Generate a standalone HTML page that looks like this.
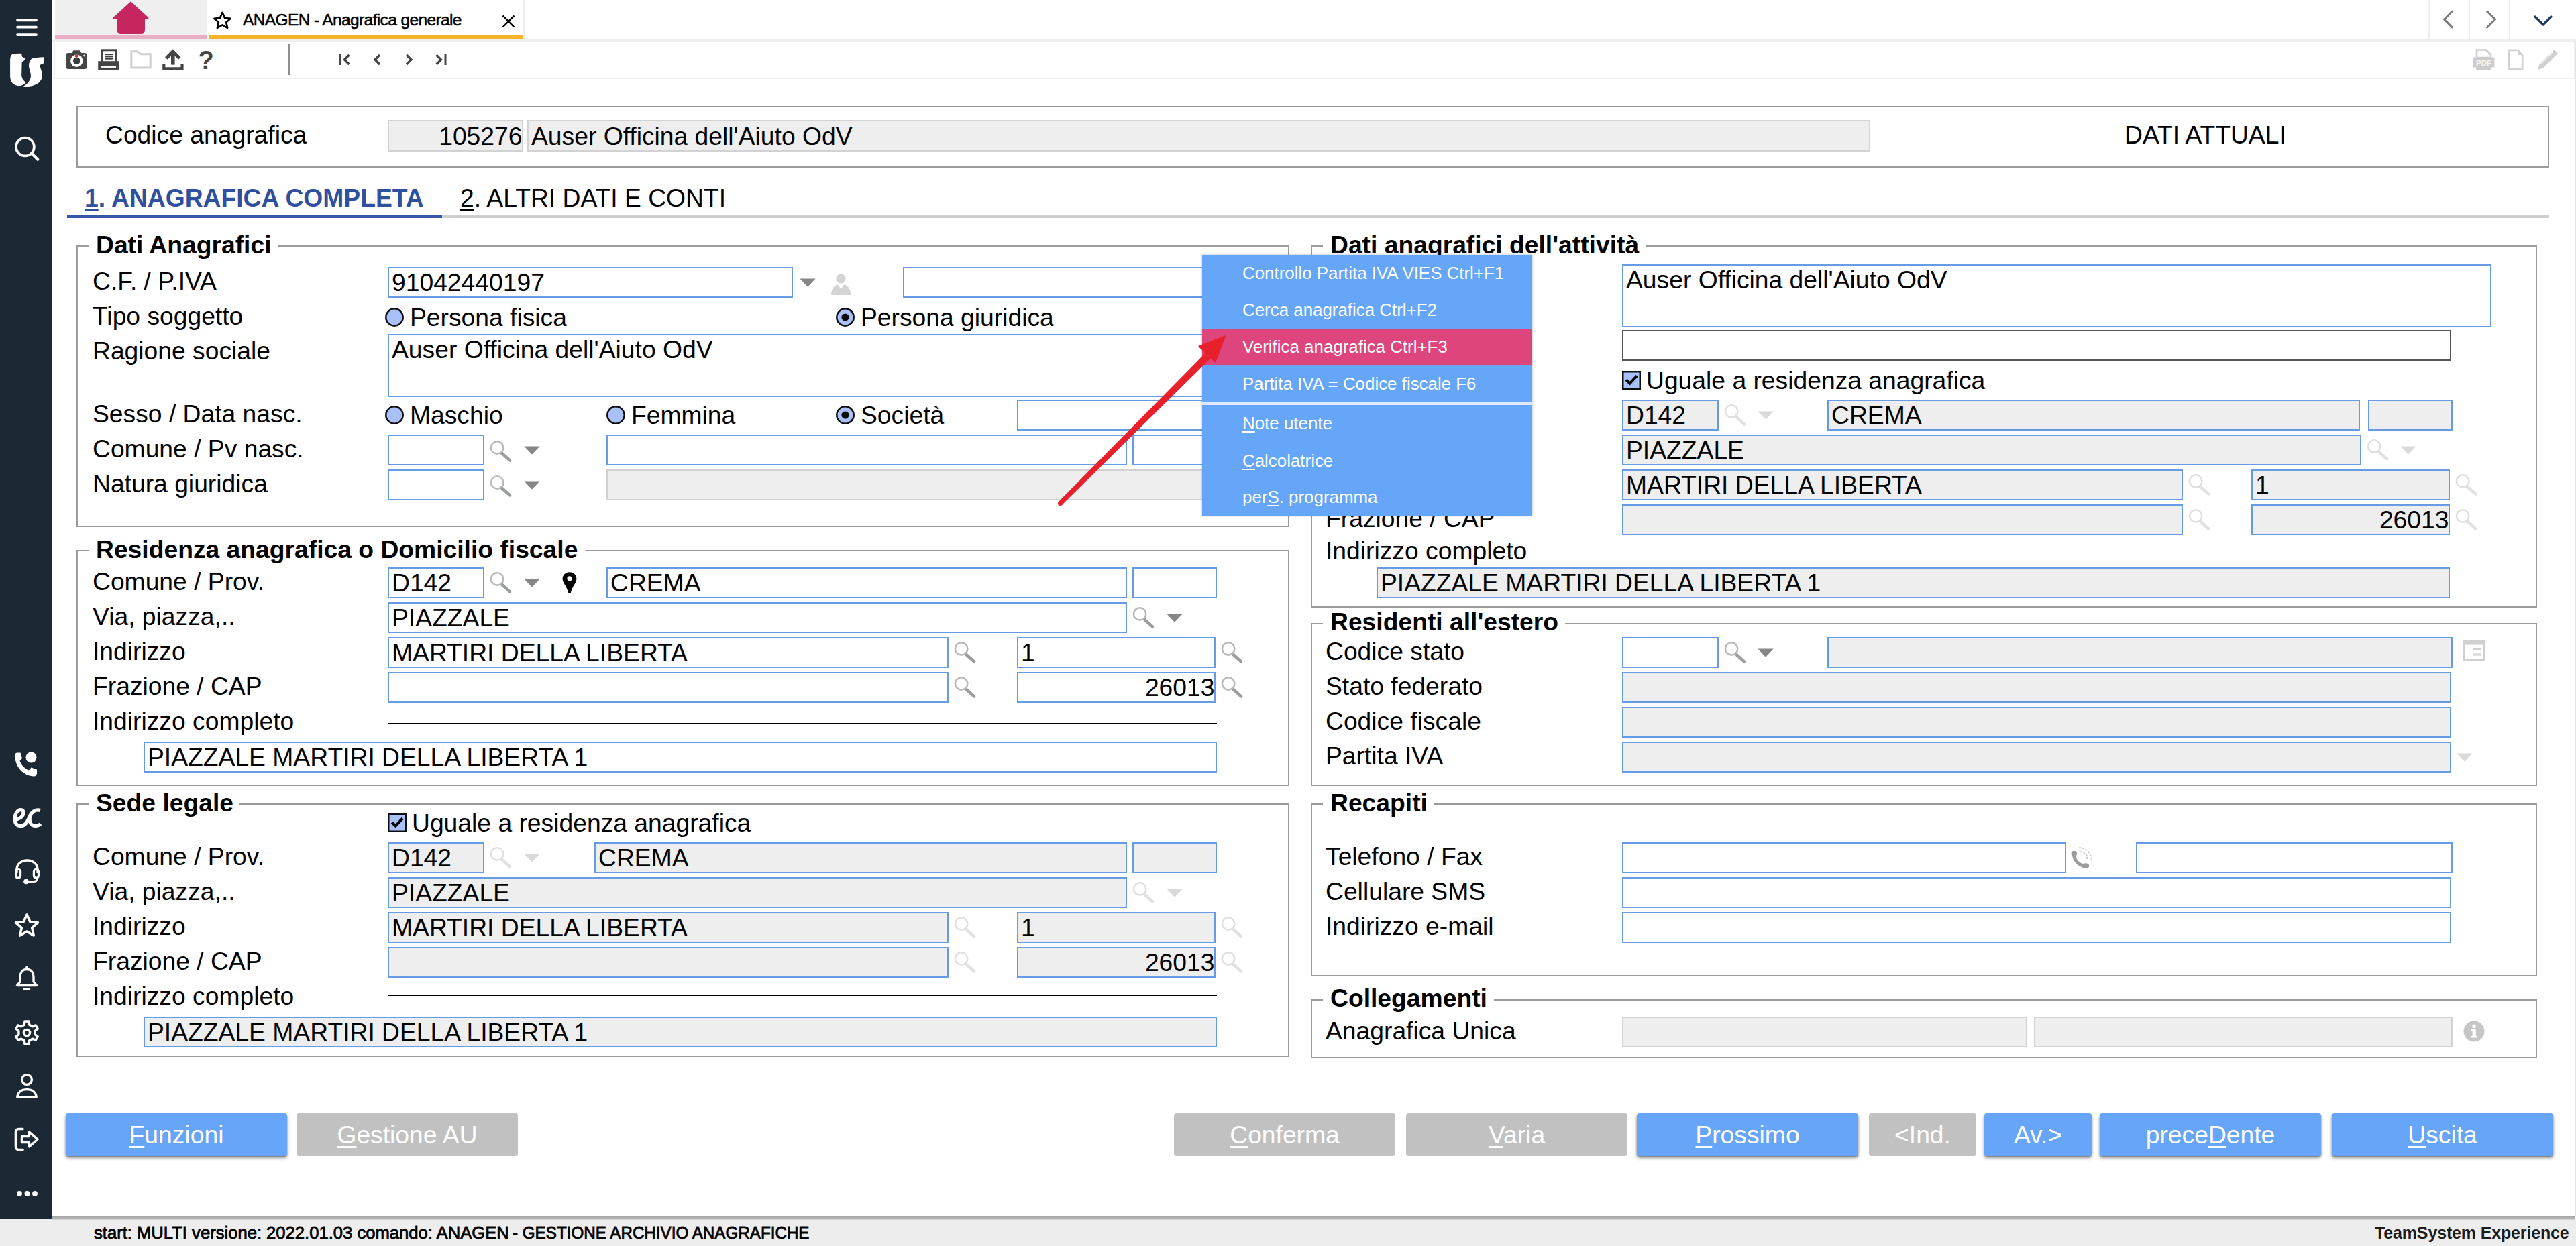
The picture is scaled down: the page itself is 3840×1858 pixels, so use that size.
<!DOCTYPE html>
<html lang="it"><head><meta charset="utf-8"><title>ANAGEN - Anagrafica generale</title>
<style>
html,body{margin:0;padding:0;background:#fff;}
body{width:3840px;height:1858px;position:relative;overflow:hidden;font-family:"Liberation Sans",sans-serif;color:#000;}
.t{position:absolute;white-space:nowrap;}
.b{font-weight:bold;}
.ic{position:absolute;display:block;overflow:visible;}
.abs{position:absolute;}
.f{position:absolute;border:2px solid #669be5;background:#fff;overflow:hidden;}
.fg{background:#eee;}
.fd{background:#eee;border-color:#d2d2d2;}
.fk{border-color:#555;}
.ft{position:absolute;white-space:nowrap;font-size:37.25px;line-height:42px;}
.fs{position:absolute;border:2px solid #9b9b9b;}
.lgbg{position:absolute;background:#fff;}
.btn{position:absolute;border-radius:4px;color:#fff;font-size:37.25px;line-height:64px;text-align:center;white-space:nowrap;}
.bb{background:#66a5f8;box-shadow:0 3px 5px rgba(0,0,0,.42),0 1px 2px rgba(0,0,0,.25);}
.bg{background:#c1c1c1;}
u{text-decoration-thickness:3px;text-underline-offset:4px;}
.mi{position:absolute;left:0;width:492px;height:55px;}
.mi span{position:absolute;left:60px;white-space:nowrap;font-size:25.9px;line-height:30px;color:#fff;}
.mi u{text-decoration-thickness:2px;text-underline-offset:3px;}
</style></head><body>

<div class="abs" style="left:78px;top:0;width:3762px;height:58px;background:#fff"></div>
<div class="abs" style="left:82px;top:0;width:227px;height:52px;background:#efefef"></div>
<div class="abs" style="left:82px;top:52px;width:227px;height:5.5px;background:#e9aec6"></div>
<div class="abs" style="left:312px;top:52px;width:469px;height:5.5px;background:#f5b32a"></div>
<div class="abs" style="left:78px;top:58px;width:3762px;height:4px;background:#eeeeee"></div>
<svg class="ic" style="left:166px;top:0" width="58" height="52" viewBox="0 0 58 52"><path d="M29 2.2 L55 26 Q56.5 28 54 28.2 H50 V44 Q50 50 44 50 H14 Q8 50 8 44 V28.2 H4 Q1.5 28 3 26 Z" fill="#c5265f"/></svg>
<svg class="ic" style="left:316.5px;top:15.5px" width="29" height="29" viewBox="0 0 32 32"><path d="M16 3.2 L19.9 12 L29.4 12.9 L22.2 19.2 L24.4 28.6 L16 23.6 L7.6 28.6 L9.8 19.2 L2.6 12.9 L12.1 12 Z" fill="none" stroke="#000" stroke-width="2.9" stroke-linejoin="round"/></svg>
<div class="t " style="left:362.00px;top:14.51px;font-size:24.5px;line-height:30px;letter-spacing:-0.62px;-webkit-text-stroke:0.55px #000;">ANAGEN - Anagrafica generale</div>
<svg class="ic" style="left:748px;top:22px" width="20" height="20" viewBox="0 0 20 20"><path d="M1.5 1.5 L18.5 18.5 M18.5 1.5 L1.5 18.5" stroke="#000" stroke-width="2.4"/></svg>
<div class="abs" style="left:780px;top:0;width:1.5px;height:58px;background:#ececec"></div>
<div class="abs" style="left:3620px;top:0;width:2px;height:58px;background:#eeeeee"></div>
<div class="abs" style="left:3680px;top:0;width:2px;height:58px;background:#eeeeee"></div>
<div class="abs" style="left:3740px;top:0;width:2px;height:58px;background:#eeeeee"></div>
<svg class="ic" style="left:3640px;top:14px" width="20" height="30" viewBox="0 0 20 30"><path d="M15.5 3 L3.5 15 L15.5 27" fill="none" stroke="#777" stroke-width="3" stroke-linecap="round" stroke-linejoin="round"/></svg>
<svg class="ic" style="left:3703px;top:14px" width="20" height="30" viewBox="0 0 20 30"><path d="M4.5 3 L16.5 15 L4.5 27" fill="none" stroke="#777" stroke-width="3" stroke-linecap="round" stroke-linejoin="round"/></svg>
<svg class="ic" style="left:3776px;top:22px" width="30" height="18" viewBox="0 0 30 18"><path d="M3 3 L15 15 L27 3" fill="none" stroke="#1d3a5f" stroke-width="3.2" stroke-linecap="round" stroke-linejoin="round"/></svg>
<div class="abs" style="left:80px;top:62px;width:3755px;height:54px;background:#fff;border:2px solid #ededed;border-top:none"></div>
<div class="abs" style="left:3838px;top:62px;width:2px;height:1752px;background:#e6e6e6"></div>
<svg class="ic" style="left:98px;top:75px" width="32" height="28" viewBox="0 0 32 28"><path d="M0 8 Q0 4 4 4 H9.2 L11.4 0.2 H21.2 L23.4 4 H28 Q32 4 32 8 V24 Q32 28 28 28 H4 Q0 28 0 24 Z" fill="#454545"/><circle cx="16.3" cy="15.8" r="9.2" fill="#fff"/><circle cx="16.3" cy="15.8" r="5.3" fill="#3c3c3c"/><ellipse cx="16.3" cy="8.6" rx="2.8" ry="1.9" fill="#d4222a"/><circle cx="27.6" cy="8" r="1.4" fill="#e6e6e6"/></svg>
<svg class="ic" style="left:146px;top:73px" width="32" height="32" viewBox="0 0 32 32"><rect x="6" y="1.8" width="20.6" height="20" fill="#fff" stroke="#454545" stroke-width="3"/><path d="M10 8.2 H22.6 M10 11.4 H22.6 M10 14.6 H22.6" stroke="#454545" stroke-width="2.1"/><rect x="0.2" y="18.2" width="31.4" height="13.3" fill="#454545"/><path d="M4.8 26.6 H27" stroke="#fff" stroke-width="2.6"/></svg>
<svg class="ic" style="left:194px;top:75px" width="32" height="28" viewBox="0 0 32 28"><path d="M1.8 26 V1.8 H11 L15.5 5.8 H30.2 V26 Z" fill="#fff" stroke="#cfcfcf" stroke-width="3"/></svg>
<svg class="ic" style="left:242px;top:74px" width="32" height="31" viewBox="0 0 32 31"><path d="M15.8 4 V22.6" stroke="#454545" stroke-width="5.6"/><path d="M5.8 13 L15.8 3 L25.8 13" fill="none" stroke="#454545" stroke-width="5.2"/><path d="M2.3 21.4 V28.4 H29.5 V21.4" fill="none" stroke="#454545" stroke-width="4.2"/></svg>
<div class="t b" style="left:295.50px;top:67.83px;font-size:38px;line-height:44px;color:#454545;">?</div>
<div class="abs" style="left:430px;top:66px;width:1.5px;height:46px;background:#8f8f8f"></div>
<svg class="ic" style="left:504px;top:80px" width="20" height="18" viewBox="0 0 20 18"><path d="M3 1 V17" stroke="#454545" stroke-width="3"/><path d="M16.5 2 L9.5 9 L16.5 16" fill="none" stroke="#454545" stroke-width="3.4"/></svg>
<svg class="ic" style="left:554px;top:80px" width="16" height="18" viewBox="0 0 16 18"><path d="M12 2 L5 9 L12 16" fill="none" stroke="#454545" stroke-width="3.4"/></svg>
<svg class="ic" style="left:602px;top:80px" width="16" height="18" viewBox="0 0 16 18"><path d="M4 2 L11 9 L4 16" fill="none" stroke="#454545" stroke-width="3.4"/></svg>
<svg class="ic" style="left:647px;top:80px" width="20" height="18" viewBox="0 0 20 18"><path d="M17 1 V17" stroke="#454545" stroke-width="3"/><path d="M3.5 2 L10.5 9 L3.5 16" fill="none" stroke="#454545" stroke-width="3.4"/></svg>
<svg class="ic" style="left:3686px;top:73px" width="33" height="32" viewBox="0 0 33 32"><path d="M6 1.5 H20 L27 8.5 V13 H6 Z" fill="#fff" stroke="#cdcdcd" stroke-width="2.6"/><rect x="0.5" y="12.5" width="32" height="15" fill="#cdcdcd"/><rect x="5" y="26" width="23" height="5.5" fill="#cdcdcd"/><text x="16.5" y="25" font-family="Liberation Sans,sans-serif" font-weight="bold" font-size="11.5" text-anchor="middle" fill="#f4f4f4">PDF</text></svg>
<svg class="ic" style="left:3738px;top:73px" width="24" height="32" viewBox="0 0 24 32"><path d="M1.8 1.8 H15 L22.2 9 V30.2 H1.8 Z" fill="#fff" stroke="#d2d2d2" stroke-width="2.8"/><path d="M15 1.8 V9 H22.2 Z" fill="#d2d2d2"/></svg>
<svg class="ic" style="left:3782px;top:73px" width="32" height="32" viewBox="0 0 32 32"><path d="M25.5 1 L31 6.5 L9 28.5 L1 31 L3.5 23 Z" fill="#d0d0d0"/><path d="M6 22 L24 4" stroke="#f2f2f2" stroke-width="1.6"/></svg>
<div class="abs" style="left:0;top:0;width:78px;height:1818px;background:#1d2835;box-shadow:inset -1px 0 0 #141b22"></div>
<svg class="ic" style="left:22px;top:26px" width="36" height="30" viewBox="0 0 36 30"><path d="M4 4.3 H32 M4 14.7 H32 M4 25.1 H32" stroke="#fff" stroke-width="3.8" stroke-linecap="round"/></svg>
<svg class="ic" style="left:8px;top:72px" width="64" height="64" viewBox="0 0 1246 1246"><path d="M250 155 L470 150 L485 250 Q575 280 580 330 L480 400 L470 780 Q480 930 600 990 Q520 1090 400 1095 Q150 1080 138 820 L138 330 Q140 170 250 155 Z" fill="#fff"/><path d="M1110 258 L1112 440 Q1030 450 1000 500 Q1020 580 1060 700 Q1110 880 960 1010 Q800 1120 520 1112 Q700 1000 735 850 Q750 760 700 620 Q640 430 760 300 Q900 262 1110 258 Z" fill="#fff"/></svg>
<svg class="ic" style="left:18px;top:200px" width="44" height="44" viewBox="0 0 44 44"><circle cx="19.4" cy="19" r="13.4" fill="none" stroke="#fff" stroke-width="3.8"/><path d="M29.2 28.8 L38.2 37.8" stroke="#fff" stroke-width="4.2" stroke-linecap="round"/></svg>
<svg class="ic" style="left:20px;top:1120px" width="38" height="40" viewBox="0 0 38 40"><circle cx="26.5" cy="9.5" r="8" fill="#fff"/><path d="M2 6 C2 4 4 2.5 6 2.5 H10.5 L13 11 L9.5 14.5 C11.5 20.5 16.5 26 23 28.5 L26.5 24.5 L35 27.5 V33 C35 35.5 33 37.5 30.5 37.5 C15 37 2.5 24 2 6 Z" fill="#fff"/></svg>
<svg class="ic" style="left:17px;top:1203px" width="46" height="34" viewBox="0 0 46 34"><path d="M3.5 18.5 C10 20 18 15 18 9 C18 4 12 3 8.5 7.5 C3 14.5 4 27 12 28.5 C20 30 24 22 27 15 C30 8 36 3 43 5.5" fill="none" stroke="#fff" stroke-width="5.2" stroke-linecap="butt"/><path d="M29.5 11 C25 18 27 28 35 28.5 C38.5 28.7 41.5 27.5 43.5 25.5" fill="none" stroke="#fff" stroke-width="5.2"/></svg>
<svg class="ic" style="left:20px;top:1280px" width="40" height="40" viewBox="0 0 40 40"><path d="M5 22 V17 C5 8.5 11.5 3 20.5 3 C29.5 3 36 8.5 36 17 V22" fill="none" stroke="#fff" stroke-width="3.4"/><rect x="3.6" y="16.5" width="7" height="12.5" rx="3" fill="none" stroke="#fff" stroke-width="3.2"/><rect x="30.4" y="16.5" width="7" height="12.5" rx="3" fill="none" stroke="#fff" stroke-width="3.2"/><path d="M35.5 28 V30 C35.5 33 33 34.5 30 34.5 H22" fill="none" stroke="#fff" stroke-width="3.2"/><circle cx="19" cy="34.5" r="3.8" fill="#fff"/></svg>
<svg class="ic" style="left:20px;top:1360px" width="40" height="40" viewBox="0 0 40 40"><path d="M20 4 L24.8 14.6 L36.4 15.8 L27.7 23.6 L30.2 35 L20 29.1 L9.8 35 L12.3 23.6 L3.6 15.8 L15.2 14.6 Z" fill="none" stroke="#fff" stroke-width="3.6" stroke-linejoin="round"/></svg>
<svg class="ic" style="left:22px;top:1440px" width="36" height="40" viewBox="0 0 36 40"><path d="M18 5.5 C11 5.5 8 11 8 17 V24 L3.5 29.5 H32.5 L28 24 V17 C28 11 25 5.5 18 5.5 Z" fill="none" stroke="#fff" stroke-width="3.4" stroke-linejoin="round"/><path d="M18 5.5 V2.5" stroke="#fff" stroke-width="3.6" stroke-linecap="round"/><path d="M14.5 35 H21.5" stroke="#fff" stroke-width="3.6" stroke-linecap="round"/></svg>
<svg class="ic" style="left:20px;top:1520px" width="40" height="40" viewBox="0 0 40 40"><path d="M16.95 3.07 L23.05 3.07 L23.71 8.17 L28.39 10.87 L33.14 8.90 L36.18 14.17 L32.10 17.30 L32.10 22.70 L36.18 25.83 L33.14 31.10 L28.39 29.13 L23.71 31.83 L23.05 36.93 L16.95 36.93 L16.29 31.83 L11.61 29.13 L6.86 31.10 L3.82 25.83 L7.90 22.70 L7.90 17.30 L3.82 14.17 L6.86 8.90 L11.61 10.87 L16.29 8.17 Z" fill="none" stroke="#fff" stroke-width="3.4" stroke-linejoin="round"/><circle cx="20" cy="20" r="4.6" fill="none" stroke="#fff" stroke-width="3.4"/></svg>
<svg class="ic" style="left:22px;top:1600px" width="36" height="40" viewBox="0 0 36 40"><circle cx="18" cy="10" r="7.4" fill="none" stroke="#fff" stroke-width="3.4"/><path d="M3.8 36 C4.5 28.5 10 24.6 18 24.6 C26 24.6 31.5 28.5 32.2 36 Z" fill="none" stroke="#fff" stroke-width="3.4" stroke-linejoin="round"/></svg>
<svg class="ic" style="left:20px;top:1680px" width="40" height="38" viewBox="0 0 40 38"><path d="M14 3.5 H8 C5 3.5 3.5 5.5 3.5 8 V30 C3.5 32.5 5 34.5 8 34.5 H14" fill="none" stroke="#fff" stroke-width="3.6" stroke-linecap="round"/><path d="M12.5 14.5 H23.5 V8 L36 19 L23.5 30 V23.5 H12.5 Z" fill="none" stroke="#fff" stroke-width="3.4" stroke-linejoin="round"/></svg>
<svg class="ic" style="left:24px;top:1774px" width="34" height="12" viewBox="0 0 34 12"><circle cx="5" cy="6" r="3.9" fill="#fff"/><circle cx="16.5" cy="6" r="3.9" fill="#fff"/><circle cx="28" cy="6" r="3.9" fill="#fff"/></svg>
<div class="abs" style="left:0;top:1818px;width:3840px;height:40px;background:#ededed"></div>
<div class="abs" style="left:78px;top:1814px;width:3760px;height:4.5px;background:linear-gradient(#a4a4a4,#b9b9b9 65%,#dcdcdc)"></div>
<div class="t " style="left:140.00px;top:1821.59px;font-size:26px;line-height:32px;transform-origin:0 50%;transform:scaleX(0.985);-webkit-text-stroke:0.85px #000;">start: MULTI versione: 2022.01.03 comando: ANAGEN</div>
<div class="t " style="left:763.60px;top:1821.59px;font-size:26px;line-height:32px;transform-origin:0 50%;transform:scaleX(0.931);-webkit-text-stroke:0.85px #000;">- GESTIONE ARCHIVIO ANAGRAFICHE</div>
<div class="t b" style="left:3540.00px;top:1821.74px;font-size:25px;line-height:32px;letter-spacing:-0.15px;color:#1c1c1c;">TeamSystem Experience</div>
<div class="abs" style="left:114px;top:158px;width:3682px;height:88px;border:2px solid #9b9b9b"></div>
<div class="t " style="left:157.00px;top:180.09px;font-size:37.25px;line-height:42px;">Codice anagrafica</div>
<div class="f fd" style="left:578px;top:179px;width:198px;height:43px"><span class="ft" style="right:-0.5px;top:0.79px">105276</span></div>
<div class="f fd" style="left:786px;top:179px;width:1998px;height:43px"><span class="ft" style="left:4px;top:0.79px">Auser Officina dell'Aiuto OdV</span></div>
<div class="t " style="left:3167.00px;top:180.09px;font-size:37.25px;line-height:42px;">DATI ATTUALI</div>
<div class="t b" style="left:126.00px;top:274.09px;font-size:37.25px;line-height:42px;color:#2f4f9f;"><u>1</u>. ANAGRAFICA COMPLETA</div>
<div class="t " style="left:686.00px;top:274.09px;font-size:37.25px;line-height:42px;"><u>2</u>. ALTRI DATI E CONTI</div>
<div class="abs" style="left:100px;top:321px;width:3700px;height:4px;background:#cfcfcf"></div>
<div class="abs" style="left:100px;top:321px;width:559px;height:4px;background:#3656a8"></div>
<div class="fs" style="left:114px;top:366px;width:1804px;height:416px"></div>
<div class="lgbg" style="left:132px;top:364px;width:282px;height:8px"></div>
<div class="t b" style="left:143.00px;top:344.09px;font-size:37.25px;line-height:42px;">Dati Anagrafici</div>
<div class="t " style="left:138.00px;top:398.09px;font-size:37.25px;line-height:42px;">C.F. / P.IVA</div>
<div class="f fw" style="left:578px;top:398px;width:600px;height:42px"><span class="ft" style="left:4px;top:-0.41px">91042440197</span></div>
<svg class="ic" style="left:1192px;top:415px" width="24" height="13" viewBox="0 0 24 13"><path d="M0.3 0.4 H23.7 L12 12.8 Z" fill="#868686"/></svg>
<svg class="ic" style="left:1238px;top:407px" width="31" height="34" viewBox="0 0 31 34"><circle cx="15.5" cy="8.5" r="7.2" fill="#d4d4d4"/><path d="M1 33 C1 22 7 18 11 17.5 L15.5 24 L20 17.5 C24 18 30 22 30 33 Z" fill="#d4d4d4"/></svg>
<div class="f fw" style="left:1346px;top:398px;width:550px;height:42px"></div>
<div class="t " style="left:138.00px;top:450.09px;font-size:37.25px;line-height:42px;">Tipo soggetto</div>
<svg class="ic" style="left:574px;top:459px" width="28" height="28" viewBox="0 0 28 28"><circle cx="14" cy="14" r="12.7" fill="#a9c1f8" stroke="#0d0d12" stroke-width="2.5"/></svg>
<div class="t " style="left:611.00px;top:451.89px;font-size:37.25px;line-height:42px;">Persona fisica</div>
<svg class="ic" style="left:1246px;top:459px" width="28" height="28" viewBox="0 0 28 28"><circle cx="14" cy="14" r="12.7" fill="#a9c1f8" stroke="#0d0d12" stroke-width="2.5"/><circle cx="14" cy="14" r="5.6" fill="#0a0a0a"/></svg>
<div class="t " style="left:1283.00px;top:451.89px;font-size:37.25px;line-height:42px;">Persona giuridica</div>
<div class="t " style="left:138.00px;top:502.09px;font-size:37.25px;line-height:42px;">Ragione sociale</div>
<div class="f fw" style="left:578px;top:498px;width:1318px;height:90px"><span class="ft" style="left:4px;top:0.09px">Auser Officina dell'Aiuto OdV</span></div>
<div class="t " style="left:138.00px;top:596.09px;font-size:37.25px;line-height:42px;">Sesso / Data nasc.</div>
<svg class="ic" style="left:574px;top:605px" width="28" height="28" viewBox="0 0 28 28"><circle cx="14" cy="14" r="12.7" fill="#a9c1f8" stroke="#0d0d12" stroke-width="2.5"/></svg>
<div class="t " style="left:611.00px;top:597.59px;font-size:37.25px;line-height:42px;">Maschio</div>
<svg class="ic" style="left:904px;top:605px" width="28" height="28" viewBox="0 0 28 28"><circle cx="14" cy="14" r="12.7" fill="#a9c1f8" stroke="#0d0d12" stroke-width="2.5"/></svg>
<div class="t " style="left:941.00px;top:597.59px;font-size:37.25px;line-height:42px;">Femmina</div>
<svg class="ic" style="left:1246px;top:605px" width="28" height="28" viewBox="0 0 28 28"><circle cx="14" cy="14" r="12.7" fill="#a9c1f8" stroke="#0d0d12" stroke-width="2.5"/><circle cx="14" cy="14" r="5.6" fill="#0a0a0a"/></svg>
<div class="t " style="left:1283.00px;top:597.59px;font-size:37.25px;line-height:42px;">Società</div>
<div class="f fw" style="left:1516px;top:596px;width:380px;height:42px"></div>
<div class="t " style="left:138.00px;top:648.09px;font-size:37.25px;line-height:42px;">Comune / Pv nasc.</div>
<div class="f fw" style="left:578px;top:648px;width:140px;height:42px"></div>
<svg class="ic" style="left:730px;top:657px" width="34" height="33" viewBox="0 0 34 33"><line x1="17.6" y1="18.2" x2="30" y2="29.4" stroke="#9a9e9a" stroke-width="4.6" stroke-linecap="round"/><circle cx="11.1" cy="10.4" r="9.2" fill="#fff" fill-opacity="0.0" stroke="#b9b9b9" stroke-width="2.6"/></svg>
<svg class="ic" style="left:781px;top:665px" width="24" height="13" viewBox="0 0 24 13"><path d="M0.3 0.4 H23.7 L12 12.8 Z" fill="#868686"/></svg>
<div class="f fw" style="left:904px;top:648px;width:772px;height:42px"></div>
<div class="f fw" style="left:1688px;top:648px;width:122px;height:42px"></div>
<div class="t " style="left:138.00px;top:700.09px;font-size:37.25px;line-height:42px;">Natura giuridica</div>
<div class="f fw" style="left:578px;top:700px;width:140px;height:42px"></div>
<svg class="ic" style="left:730px;top:709px" width="34" height="33" viewBox="0 0 34 33"><line x1="17.6" y1="18.2" x2="30" y2="29.4" stroke="#9a9e9a" stroke-width="4.6" stroke-linecap="round"/><circle cx="11.1" cy="10.4" r="9.2" fill="#fff" fill-opacity="0.0" stroke="#b9b9b9" stroke-width="2.6"/></svg>
<svg class="ic" style="left:781px;top:717px" width="24" height="13" viewBox="0 0 24 13"><path d="M0.3 0.4 H23.7 L12 12.8 Z" fill="#868686"/></svg>
<div class="f fd" style="left:904px;top:700px;width:906px;height:42px"></div>
<div class="fs" style="left:114px;top:820px;width:1804px;height:348px"></div>
<div class="lgbg" style="left:132px;top:818px;width:740px;height:8px"></div>
<div class="t b" style="left:143.00px;top:797.59px;font-size:37.25px;line-height:42px;">Residenza anagrafica o Domicilio fiscale</div>
<div class="t " style="left:138.00px;top:846.09px;font-size:37.25px;line-height:42px;">Comune / Prov.</div>
<div class="f fw" style="left:578px;top:846px;width:140px;height:42px"><span class="ft" style="left:4px;top:-0.41px">D142</span></div>
<svg class="ic" style="left:730px;top:853px" width="34" height="33" viewBox="0 0 34 33"><line x1="17.6" y1="18.2" x2="30" y2="29.4" stroke="#9a9e9a" stroke-width="4.6" stroke-linecap="round"/><circle cx="11.1" cy="10.4" r="9.2" fill="#fff" fill-opacity="0.0" stroke="#b9b9b9" stroke-width="2.6"/></svg>
<svg class="ic" style="left:781px;top:863px" width="24" height="13" viewBox="0 0 24 13"><path d="M0.3 0.4 H23.7 L12 12.8 Z" fill="#868686"/></svg>
<svg class="ic" style="left:838px;top:853px" width="22" height="32" viewBox="0 0 22 32"><path d="M11 0.3 C4.6 0.3 0.6 4.8 0.6 10.2 C0.6 16.5 7 21 9.4 31.5 H12.6 C15 21 21.4 16.5 21.4 10.2 C21.4 4.8 17.4 0.3 11 0.3 Z" fill="#000"/><circle cx="11" cy="9.8" r="3.6" fill="#fff"/></svg>
<div class="f fw" style="left:904px;top:846px;width:772px;height:42px"><span class="ft" style="left:4px;top:-0.41px">CREMA</span></div>
<div class="f fw" style="left:1688px;top:846px;width:122px;height:42px"></div>
<div class="t " style="left:138.00px;top:898.09px;font-size:37.25px;line-height:42px;">Via, piazza,..</div>
<div class="f fw" style="left:578px;top:898px;width:1098px;height:42px"><span class="ft" style="left:4px;top:-0.41px">PIAZZALE</span></div>
<svg class="ic" style="left:1688px;top:905px" width="34" height="33" viewBox="0 0 34 33"><line x1="17.6" y1="18.2" x2="30" y2="29.4" stroke="#9a9e9a" stroke-width="4.6" stroke-linecap="round"/><circle cx="11.1" cy="10.4" r="9.2" fill="#fff" fill-opacity="0.0" stroke="#b9b9b9" stroke-width="2.6"/></svg>
<svg class="ic" style="left:1739px;top:915px" width="24" height="13" viewBox="0 0 24 13"><path d="M0.3 0.4 H23.7 L12 12.8 Z" fill="#868686"/></svg>
<div class="t " style="left:138.00px;top:950.09px;font-size:37.25px;line-height:42px;">Indirizzo</div>
<div class="f fw" style="left:578px;top:950px;width:832px;height:42px"><span class="ft" style="left:4px;top:-0.41px">MARTIRI DELLA LIBERTA</span></div>
<svg class="ic" style="left:1422px;top:957px" width="34" height="33" viewBox="0 0 34 33"><line x1="17.6" y1="18.2" x2="30" y2="29.4" stroke="#9a9e9a" stroke-width="4.6" stroke-linecap="round"/><circle cx="11.1" cy="10.4" r="9.2" fill="#fff" fill-opacity="0.0" stroke="#b9b9b9" stroke-width="2.6"/></svg>
<div class="f fw" style="left:1516px;top:950px;width:292px;height:42px"><span class="ft" style="left:4px;top:-0.41px">1</span></div>
<svg class="ic" style="left:1820px;top:957px" width="34" height="33" viewBox="0 0 34 33"><line x1="17.6" y1="18.2" x2="30" y2="29.4" stroke="#9a9e9a" stroke-width="4.6" stroke-linecap="round"/><circle cx="11.1" cy="10.4" r="9.2" fill="#fff" fill-opacity="0.0" stroke="#b9b9b9" stroke-width="2.6"/></svg>
<div class="t " style="left:138.00px;top:1002.09px;font-size:37.25px;line-height:42px;">Frazione / CAP</div>
<div class="f fw" style="left:578px;top:1002px;width:832px;height:42px"></div>
<svg class="ic" style="left:1422px;top:1009px" width="34" height="33" viewBox="0 0 34 33"><line x1="17.6" y1="18.2" x2="30" y2="29.4" stroke="#9a9e9a" stroke-width="4.6" stroke-linecap="round"/><circle cx="11.1" cy="10.4" r="9.2" fill="#fff" fill-opacity="0.0" stroke="#b9b9b9" stroke-width="2.6"/></svg>
<div class="f fw" style="left:1516px;top:1002px;width:292px;height:42px"><span class="ft" style="right:-0.5px;top:-0.41px">26013</span></div>
<svg class="ic" style="left:1820px;top:1009px" width="34" height="33" viewBox="0 0 34 33"><line x1="17.6" y1="18.2" x2="30" y2="29.4" stroke="#9a9e9a" stroke-width="4.6" stroke-linecap="round"/><circle cx="11.1" cy="10.4" r="9.2" fill="#fff" fill-opacity="0.0" stroke="#b9b9b9" stroke-width="2.6"/></svg>
<div class="t " style="left:138.00px;top:1054.09px;font-size:37.25px;line-height:42px;">Indirizzo completo</div>
<div class="abs" style="left:578px;top:1078px;width:1236px;height:1px;background:#000"></div>
<div class="f fw" style="left:214px;top:1106px;width:1596px;height:42px"><span class="ft" style="left:4px;top:-0.41px">PIAZZALE MARTIRI DELLA LIBERTA 1</span></div>
<div class="fs" style="left:114px;top:1198px;width:1804px;height:374px"></div>
<div class="lgbg" style="left:132px;top:1196px;width:225px;height:8px"></div>
<div class="t b" style="left:143.00px;top:1176.09px;font-size:37.25px;line-height:42px;">Sede legale</div>
<svg class="ic" style="left:578px;top:1213px" width="28" height="28" viewBox="0 0 28 28"><rect x="1.25" y="1.25" width="25.5" height="25.5" fill="#a9c1f8" stroke="#0d0d12" stroke-width="2.5"/><path d="M6.2 13.2 L11.6 18.6 L22.2 7.4" fill="none" stroke="#000" stroke-width="4.2"/></svg>
<div class="t " style="left:614.00px;top:1205.59px;font-size:37.25px;line-height:42px;">Uguale a residenza anagrafica</div>
<div class="t " style="left:138.00px;top:1256.09px;font-size:37.25px;line-height:42px;">Comune / Prov.</div>
<div class="f fg" style="left:578px;top:1256px;width:140px;height:42px"><span class="ft" style="left:4px;top:-0.41px">D142</span></div>
<svg class="ic" style="left:730px;top:1263px" width="34" height="33" viewBox="0 0 34 33"><line x1="17.6" y1="18.2" x2="30" y2="29.4" stroke="#e1e1e1" stroke-width="4.6" stroke-linecap="round"/><circle cx="11.1" cy="10.4" r="9.2" fill="#fff" fill-opacity="0.0" stroke="#e0e0e0" stroke-width="2.6"/></svg>
<svg class="ic" style="left:781px;top:1273px" width="24" height="13" viewBox="0 0 24 13"><path d="M0.3 0.4 H23.7 L12 12.8 Z" fill="#dadada"/></svg>
<div class="f fg" style="left:886px;top:1256px;width:790px;height:42px"><span class="ft" style="left:4px;top:-0.41px">CREMA</span></div>
<div class="f fg" style="left:1688px;top:1256px;width:122px;height:42px"></div>
<div class="t " style="left:138.00px;top:1308.09px;font-size:37.25px;line-height:42px;">Via, piazza,..</div>
<div class="f fg" style="left:578px;top:1308px;width:1098px;height:42px"><span class="ft" style="left:4px;top:-0.41px">PIAZZALE</span></div>
<svg class="ic" style="left:1688px;top:1315px" width="34" height="33" viewBox="0 0 34 33"><line x1="17.6" y1="18.2" x2="30" y2="29.4" stroke="#e1e1e1" stroke-width="4.6" stroke-linecap="round"/><circle cx="11.1" cy="10.4" r="9.2" fill="#fff" fill-opacity="0.0" stroke="#e0e0e0" stroke-width="2.6"/></svg>
<svg class="ic" style="left:1739px;top:1325px" width="24" height="13" viewBox="0 0 24 13"><path d="M0.3 0.4 H23.7 L12 12.8 Z" fill="#dadada"/></svg>
<div class="t " style="left:138.00px;top:1360.09px;font-size:37.25px;line-height:42px;">Indirizzo</div>
<div class="f fg" style="left:578px;top:1360px;width:832px;height:42px"><span class="ft" style="left:4px;top:-0.41px">MARTIRI DELLA LIBERTA</span></div>
<svg class="ic" style="left:1422px;top:1367px" width="34" height="33" viewBox="0 0 34 33"><line x1="17.6" y1="18.2" x2="30" y2="29.4" stroke="#e1e1e1" stroke-width="4.6" stroke-linecap="round"/><circle cx="11.1" cy="10.4" r="9.2" fill="#fff" fill-opacity="0.0" stroke="#e0e0e0" stroke-width="2.6"/></svg>
<div class="f fg" style="left:1516px;top:1360px;width:292px;height:42px"><span class="ft" style="left:4px;top:-0.41px">1</span></div>
<svg class="ic" style="left:1820px;top:1367px" width="34" height="33" viewBox="0 0 34 33"><line x1="17.6" y1="18.2" x2="30" y2="29.4" stroke="#e1e1e1" stroke-width="4.6" stroke-linecap="round"/><circle cx="11.1" cy="10.4" r="9.2" fill="#fff" fill-opacity="0.0" stroke="#e0e0e0" stroke-width="2.6"/></svg>
<div class="t " style="left:138.00px;top:1412.09px;font-size:37.25px;line-height:42px;">Frazione / CAP</div>
<div class="f fg" style="left:578px;top:1412px;width:832px;height:42px"></div>
<svg class="ic" style="left:1422px;top:1419px" width="34" height="33" viewBox="0 0 34 33"><line x1="17.6" y1="18.2" x2="30" y2="29.4" stroke="#e1e1e1" stroke-width="4.6" stroke-linecap="round"/><circle cx="11.1" cy="10.4" r="9.2" fill="#fff" fill-opacity="0.0" stroke="#e0e0e0" stroke-width="2.6"/></svg>
<div class="f fg" style="left:1516px;top:1412px;width:292px;height:42px"><span class="ft" style="right:-0.5px;top:-0.41px">26013</span></div>
<svg class="ic" style="left:1820px;top:1419px" width="34" height="33" viewBox="0 0 34 33"><line x1="17.6" y1="18.2" x2="30" y2="29.4" stroke="#e1e1e1" stroke-width="4.6" stroke-linecap="round"/><circle cx="11.1" cy="10.4" r="9.2" fill="#fff" fill-opacity="0.0" stroke="#e0e0e0" stroke-width="2.6"/></svg>
<div class="t " style="left:138.00px;top:1464.09px;font-size:37.25px;line-height:42px;">Indirizzo completo</div>
<div class="abs" style="left:578px;top:1484px;width:1236px;height:1px;background:#000"></div>
<div class="f fg" style="left:214px;top:1516px;width:1596px;height:42px"><span class="ft" style="left:4px;top:-0.41px">PIAZZALE MARTIRI DELLA LIBERTA 1</span></div>
<div class="fs" style="left:1954px;top:366px;width:1824px;height:536px"></div>
<div class="lgbg" style="left:1972px;top:364px;width:482px;height:8px"></div>
<div class="t b" style="left:1983.00px;top:344.09px;font-size:37.25px;line-height:42px;">Dati anagrafici dell'attività</div>
<div class="f fw" style="left:2418px;top:394px;width:1292px;height:90px"><span class="ft" style="left:4px;top:0.09px">Auser Officina dell'Aiuto OdV</span></div>
<div class="f fk" style="left:2418px;top:492px;width:1232px;height:42px"></div>
<svg class="ic" style="left:2418px;top:553px" width="28" height="28" viewBox="0 0 28 28"><rect x="1.25" y="1.25" width="25.5" height="25.5" fill="#a9c1f8" stroke="#0d0d12" stroke-width="2.5"/><path d="M6.2 13.2 L11.6 18.6 L22.2 7.4" fill="none" stroke="#000" stroke-width="4.2"/></svg>
<div class="t " style="left:2454.00px;top:545.59px;font-size:37.25px;line-height:42px;">Uguale a residenza anagrafica</div>
<div class="f fg" style="left:2418px;top:596px;width:140px;height:42px"><span class="ft" style="left:4px;top:-0.41px">D142</span></div>
<svg class="ic" style="left:2570px;top:603px" width="34" height="33" viewBox="0 0 34 33"><line x1="17.6" y1="18.2" x2="30" y2="29.4" stroke="#e1e1e1" stroke-width="4.6" stroke-linecap="round"/><circle cx="11.1" cy="10.4" r="9.2" fill="#fff" fill-opacity="0.0" stroke="#e0e0e0" stroke-width="2.6"/></svg>
<svg class="ic" style="left:2620px;top:613px" width="24" height="13" viewBox="0 0 24 13"><path d="M0.3 0.4 H23.7 L12 12.8 Z" fill="#dadada"/></svg>
<div class="f fg" style="left:2724px;top:596px;width:790px;height:42px"><span class="ft" style="left:4px;top:-0.41px">CREMA</span></div>
<div class="f fg" style="left:3530px;top:596px;width:122px;height:42px"></div>
<div class="f fg" style="left:2418px;top:648px;width:1098px;height:42px"><span class="ft" style="left:4px;top:-0.41px">PIAZZALE</span></div>
<svg class="ic" style="left:3528px;top:655px" width="34" height="33" viewBox="0 0 34 33"><line x1="17.6" y1="18.2" x2="30" y2="29.4" stroke="#e1e1e1" stroke-width="4.6" stroke-linecap="round"/><circle cx="11.1" cy="10.4" r="9.2" fill="#fff" fill-opacity="0.0" stroke="#e0e0e0" stroke-width="2.6"/></svg>
<svg class="ic" style="left:3578px;top:665px" width="24" height="13" viewBox="0 0 24 13"><path d="M0.3 0.4 H23.7 L12 12.8 Z" fill="#dadada"/></svg>
<div class="f fg" style="left:2418px;top:700px;width:832px;height:42px"><span class="ft" style="left:4px;top:-0.41px">MARTIRI DELLA LIBERTA</span></div>
<svg class="ic" style="left:3262px;top:707px" width="34" height="33" viewBox="0 0 34 33"><line x1="17.6" y1="18.2" x2="30" y2="29.4" stroke="#e1e1e1" stroke-width="4.6" stroke-linecap="round"/><circle cx="11.1" cy="10.4" r="9.2" fill="#fff" fill-opacity="0.0" stroke="#e0e0e0" stroke-width="2.6"/></svg>
<div class="f fg" style="left:3356px;top:700px;width:292px;height:42px"><span class="ft" style="left:4px;top:-0.41px">1</span></div>
<svg class="ic" style="left:3660px;top:707px" width="34" height="33" viewBox="0 0 34 33"><line x1="17.6" y1="18.2" x2="30" y2="29.4" stroke="#e1e1e1" stroke-width="4.6" stroke-linecap="round"/><circle cx="11.1" cy="10.4" r="9.2" fill="#fff" fill-opacity="0.0" stroke="#e0e0e0" stroke-width="2.6"/></svg>
<div class="t " style="left:1976.00px;top:752.09px;font-size:37.25px;line-height:42px;">Frazione / CAP</div>
<div class="f fg" style="left:2418px;top:752px;width:832px;height:42px"></div>
<svg class="ic" style="left:3262px;top:759px" width="34" height="33" viewBox="0 0 34 33"><line x1="17.6" y1="18.2" x2="30" y2="29.4" stroke="#e1e1e1" stroke-width="4.6" stroke-linecap="round"/><circle cx="11.1" cy="10.4" r="9.2" fill="#fff" fill-opacity="0.0" stroke="#e0e0e0" stroke-width="2.6"/></svg>
<div class="f fg" style="left:3356px;top:752px;width:292px;height:42px"><span class="ft" style="right:-0.5px;top:-0.41px">26013</span></div>
<svg class="ic" style="left:3660px;top:759px" width="34" height="33" viewBox="0 0 34 33"><line x1="17.6" y1="18.2" x2="30" y2="29.4" stroke="#e1e1e1" stroke-width="4.6" stroke-linecap="round"/><circle cx="11.1" cy="10.4" r="9.2" fill="#fff" fill-opacity="0.0" stroke="#e0e0e0" stroke-width="2.6"/></svg>
<div class="t " style="left:1976.00px;top:800.09px;font-size:37.25px;line-height:42px;">Indirizzo completo</div>
<div class="abs" style="left:2418px;top:818px;width:1236px;height:1px;background:#000"></div>
<div class="f fg" style="left:2052px;top:846px;width:1596px;height:42px"><span class="ft" style="left:4px;top:-0.41px">PIAZZALE MARTIRI DELLA LIBERTA 1</span></div>
<div class="fs" style="left:1954px;top:929px;width:1824px;height:239px"></div>
<div class="lgbg" style="left:1972px;top:927px;width:361px;height:8px"></div>
<div class="t b" style="left:1983.00px;top:906.09px;font-size:37.25px;line-height:42px;">Residenti all'estero</div>
<div class="t " style="left:1976.00px;top:950.09px;font-size:37.25px;line-height:42px;">Codice stato</div>
<div class="f fw" style="left:2418px;top:950px;width:140px;height:42px"></div>
<svg class="ic" style="left:2570px;top:957px" width="34" height="33" viewBox="0 0 34 33"><line x1="17.6" y1="18.2" x2="30" y2="29.4" stroke="#9a9e9a" stroke-width="4.6" stroke-linecap="round"/><circle cx="11.1" cy="10.4" r="9.2" fill="#fff" fill-opacity="0.0" stroke="#b9b9b9" stroke-width="2.6"/></svg>
<svg class="ic" style="left:2620px;top:967px" width="24" height="13" viewBox="0 0 24 13"><path d="M0.3 0.4 H23.7 L12 12.8 Z" fill="#868686"/></svg>
<div class="f fg" style="left:2724px;top:950px;width:928px;height:42px"></div>
<svg class="ic" style="left:3671px;top:954px" width="34" height="32" viewBox="0 0 34 32"><rect x="1.5" y="1.5" width="31" height="29" fill="#fff" stroke="#d0d0d0" stroke-width="3"/><rect x="1.5" y="1.5" width="31" height="6" fill="#d0d0d0"/><path d="M16 14.5 H27 M16 22 H27" stroke="#d0d0d0" stroke-width="3"/></svg>
<div class="t " style="left:1976.00px;top:1002.09px;font-size:37.25px;line-height:42px;">Stato federato</div>
<div class="f fg" style="left:2418px;top:1002px;width:1232px;height:42px"></div>
<div class="t " style="left:1976.00px;top:1054.09px;font-size:37.25px;line-height:42px;">Codice fiscale</div>
<div class="f fg" style="left:2418px;top:1054px;width:1232px;height:42px"></div>
<div class="t " style="left:1976.00px;top:1106.09px;font-size:37.25px;line-height:42px;">Partita IVA</div>
<div class="f fg" style="left:2418px;top:1106px;width:1232px;height:42px"></div>
<svg class="ic" style="left:3662px;top:1123px" width="24" height="13" viewBox="0 0 24 13"><path d="M0.3 0.4 H23.7 L12 12.8 Z" fill="#dadada"/></svg>
<div class="fs" style="left:1954px;top:1198px;width:1824px;height:254px"></div>
<div class="lgbg" style="left:1972px;top:1196px;width:165px;height:8px"></div>
<div class="t b" style="left:1983.00px;top:1176.09px;font-size:37.25px;line-height:42px;">Recapiti</div>
<div class="t " style="left:1976.00px;top:1256.09px;font-size:37.25px;line-height:42px;">Telefono / Fax</div>
<div class="f fw" style="left:2418px;top:1256px;width:658px;height:42px"></div>
<svg class="ic" style="left:3086px;top:1261px" width="35" height="36" viewBox="0 0 35 36"><path d="M5.5 11.5 C5 22 13 30 24 31" stroke="#9c9c9c" stroke-width="5" fill="none" stroke-linecap="round"/><circle cx="5.8" cy="12" r="4.3" fill="#9c9c9c"/><ellipse cx="22.8" cy="30.2" rx="5.6" ry="3.9" fill="#9c9c9c"/><path d="M13 3 C24 3 32 12 32 23" stroke="#cdcdcd" stroke-width="2" stroke-dasharray="3 2" fill="none"/><path d="M15 9 C21 9 26 14 26 20" stroke="#d2d2d2" stroke-width="2" stroke-dasharray="3 2" fill="none"/><circle cx="25.2" cy="18.2" r="1.6" fill="#c8c8c8"/></svg>
<div class="f fw" style="left:3184px;top:1256px;width:468px;height:42px"></div>
<div class="t " style="left:1976.00px;top:1308.09px;font-size:37.25px;line-height:42px;">Cellulare SMS</div>
<div class="f fw" style="left:2418px;top:1308px;width:1232px;height:42px"></div>
<div class="t " style="left:1976.00px;top:1360.09px;font-size:37.25px;line-height:42px;">Indirizzo e-mail</div>
<div class="f fw" style="left:2418px;top:1360px;width:1232px;height:42px"></div>
<div class="fs" style="left:1954px;top:1490px;width:1824px;height:84px"></div>
<div class="lgbg" style="left:1972px;top:1488px;width:255px;height:8px"></div>
<div class="t b" style="left:1983.00px;top:1467.09px;font-size:37.25px;line-height:42px;">Collegamenti</div>
<div class="t " style="left:1976.00px;top:1516.09px;font-size:37.25px;line-height:42px;">Anagrafica Unica</div>
<div class="f fd" style="left:2418px;top:1516px;width:600px;height:42px"></div>
<div class="f fd" style="left:3032px;top:1516px;width:620px;height:42px"></div>
<svg class="ic" style="left:3672px;top:1522px" width="32" height="32" viewBox="0 0 32 32"><circle cx="16" cy="16" r="15.5" fill="#c6c6c6"/><circle cx="16" cy="8.4" r="2.7" fill="#fff"/><path d="M11.5 13 H18.8 V23 H21 V25.6 H11.5 V23 H13.6 V15.6 H11.5 Z" fill="#fff"/></svg>
<div class="btn bb" style="left:98px;top:1660px;width:330px;height:64px"><u>F</u>unzioni</div>
<div class="btn bg" style="left:442px;top:1660px;width:330px;height:64px"><u>G</u>estione AU</div>
<div class="btn bg" style="left:1750px;top:1660px;width:330px;height:64px"><u>C</u>onferma</div>
<div class="btn bg" style="left:2096px;top:1660px;width:330px;height:64px"><u>V</u>aria</div>
<div class="btn bb" style="left:2440px;top:1660px;width:330px;height:64px"><u>P</u>rossimo</div>
<div class="btn bg" style="left:2786px;top:1660px;width:160px;height:64px">&lt;Ind.</div>
<div class="btn bb" style="left:2958px;top:1660px;width:160px;height:64px">Av.&gt;</div>
<div class="btn bb" style="left:3130px;top:1660px;width:330px;height:64px">prece<u>D</u>ente</div>
<div class="btn bb" style="left:3476px;top:1660px;width:330px;height:64px"><u>U</u>scita</div>
<div class="abs" style="left:1792px;top:380px;width:492px;height:389px;background:#66a6f8;box-shadow:0 0 3px rgba(60,90,140,.45)">
<div class="mi" style="top:0px;"><span style="top:12px">Controllo Partita IVA VIES Ctrl+F1</span></div>
<div class="mi" style="top:55px;"><span style="top:12px">Cerca anagrafica Ctrl+F2</span></div>
<div class="mi" style="top:110px;background:#de457c;"><span style="top:12px">Verifica anagrafica Ctrl+F3</span></div>
<div class="mi" style="top:165px;"><span style="top:12px">Partita IVA = Codice fiscale F6</span></div>
<div class="mi" style="top:224px;"><span style="top:12px"><u>N</u>ote utente</span></div>
<div class="mi" style="top:279.5px;"><span style="top:12px"><u>C</u>alcolatrice</span></div>
<div class="mi" style="top:334px;"><span style="top:12px">per<u>S</u>. programma</span></div>
<div class="abs" style="left:0;top:220px;width:492px;height:4px;background:#dfe9f8"></div>
</div>
<svg class="ic" style="left:1560px;top:480px" width="300" height="300" viewBox="1560 480 300 300"><path d="M1578.03 748.03 L1797.11 526.11 L1804.89 533.89 L1582.97 752.97 Z" fill="#e8202c"/><circle cx="1580.5" cy="750.5" r="3.5" fill="#e8202c"/><path d="M1826 501.5 L1787.5 516.5 L1811.5 539.5 Z" fill="#e8202c" stroke="#e8202c" stroke-width="2" stroke-linejoin="round"/></svg>
</body></html>
